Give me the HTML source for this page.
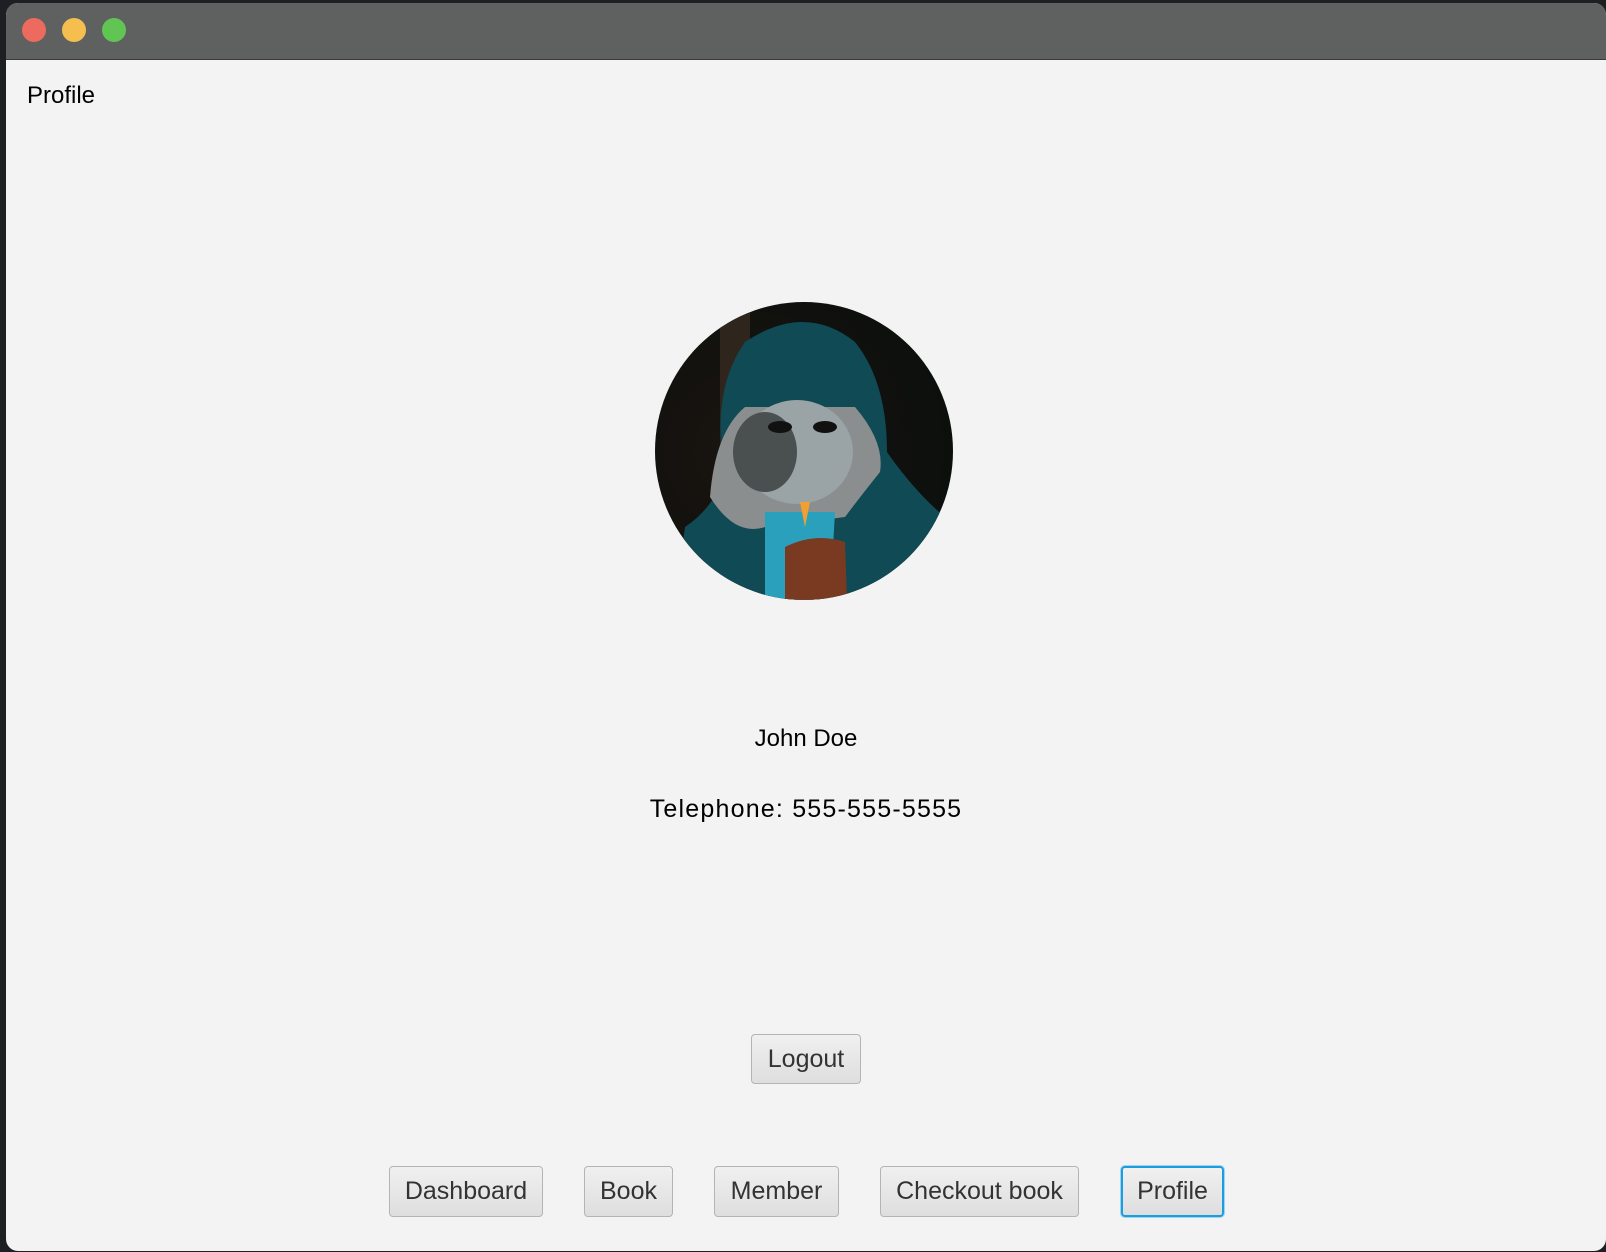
<!DOCTYPE html>
<html><head><meta charset="utf-8"><style>
html,body{margin:0;padding:0;width:1606px;height:1252px;overflow:hidden;background:#1e1f22;font-family:"Liberation Sans",sans-serif;}
.win{position:absolute;left:6px;top:3px;width:1600px;height:1248px;background:#f3f3f3;border-radius:12px;overflow:hidden;}
.tb{position:absolute;left:0;top:0;right:0;height:56px;background:#5f6060;border-bottom:1px solid #3a3a3a;}
.l{position:absolute;top:15px;width:24px;height:24px;border-radius:50%;}
.t{position:absolute;color:#000;white-space:nowrap;}
.btn{position:absolute;box-sizing:border-box;border:1px solid #b4b4b4;border-radius:4px;background:linear-gradient(#f0f0f0,#dedede);color:#333;font-size:25px;display:flex;align-items:center;justify-content:center;}
.btn.f{border:2px solid #1a9ee0;box-shadow:0 0 0 1px #9fd4f0;}
</style></head><body>
<div class="win">
<div class="tb">
<div class="l" style="left:16px;background:#ec6a5e"></div>
<div class="l" style="left:56px;background:#f4bf4f"></div>
<div class="l" style="left:96px;background:#61c554"></div>
</div>
<div class="t" style="left:21px;top:79px;font-size:24px;">Profile</div>
<svg style="position:absolute;left:649px;top:299px" width="298" height="298" viewBox="0 0 298 298">
<defs><clipPath id="c"><circle cx="149" cy="149" r="149"/></clipPath>
<radialGradient id="bg" cx="0.3" cy="0.5" r="0.8"><stop offset="0" stop-color="#1a1410"/><stop offset="1" stop-color="#0a0f0c"/></radialGradient></defs>
<g clip-path="url(#c)">
<rect width="298" height="298" fill="url(#bg)"/>
<rect x="65" y="10" width="30" height="200" fill="#3a2e24" opacity="0.7"/>
<path d="M20 298 L30 225 Q60 205 70 170 Q55 90 90 40 Q150 0 200 40 Q232 80 232 150 Q260 190 290 215 L298 298 Z" fill="#0f4a55"/>
<path d="M55 195 Q60 130 90 105 L200 105 Q230 140 225 170 Q205 195 190 215 L110 225 Q80 235 55 195 Z" fill="#8a8e8f"/>
<ellipse cx="142" cy="150" rx="56" ry="52" fill="#9aa3a5"/>
<ellipse cx="110" cy="150" rx="32" ry="40" fill="#4a4f50"/>
<ellipse cx="170" cy="125" rx="12" ry="6" fill="#111"/>
<ellipse cx="125" cy="125" rx="12" ry="6" fill="#111"/>
<path d="M110 210 L180 210 L175 298 L110 298 Z" fill="#2aa0bd"/>
<path d="M130 245 Q160 230 190 240 L192 298 L130 298 Z" fill="#7a3a22"/>
<path d="M145 200 L150 225 L155 200 Z" fill="#f0a030"/>
</g>
</svg>
<div class="t" style="left:0;width:1600px;text-align:center;top:722px;font-size:24px;">John Doe</div>
<div class="t" style="left:0;width:1600px;text-align:center;top:792px;font-size:25px;letter-spacing:1.2px;">Telephone: 555-555-5555</div>
<div class="btn" style="left:745px;top:1031px;width:110px;height:50px;">Logout</div>
<div class="btn" style="left:383px;top:1163px;width:154px;height:51px;">Dashboard</div>
<div class="btn" style="left:578px;top:1163px;width:89px;height:51px;">Book</div>
<div class="btn" style="left:708px;top:1163px;width:125px;height:51px;">Member</div>
<div class="btn" style="left:874px;top:1163px;width:199px;height:51px;">Checkout book</div>
<div class="btn f" style="left:1115px;top:1163px;width:103px;height:51px;">Profile</div>
</div>
</body></html>
